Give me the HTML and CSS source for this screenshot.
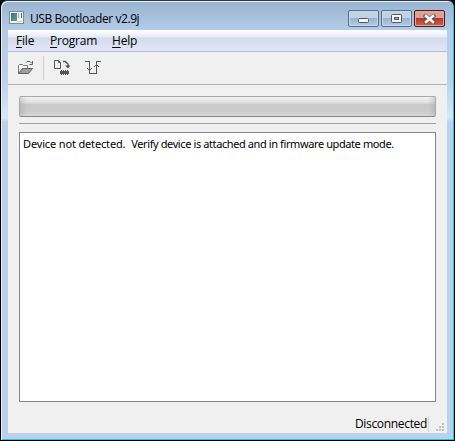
FILE: index.html
```html
<!DOCTYPE html>
<html lang="en">
<head>
<meta charset="utf-8">
<title>USB Bootloader v2.9j</title>
<link rel="stylesheet" href="styles.css">
</head>
<body>
<div class="window">
  <header class="titlebar">
    <svg class="app-icon" width="16" height="14" viewBox="0 0 16 14" shape-rendering="crispEdges">
      <defs><linearGradient id="screen" x1="0" y1="0" x2="1" y2="1"><stop offset="0" stop-color="#4068a0"/><stop offset="1" stop-color="#55b068"/></linearGradient></defs>
      <path fill="#888" d="M0 0h15v13H0z"/><path fill="#f4f4f4" d="M1 1h13v11H1z"/>
      <path fill="url(#screen)" d="M2 2h6v8H2z"/><path fill="#83b5a7" d="M9 2h1v5H9z"/><path fill="#387886" d="M12 2h1v5h-1z"/><path fill="#ccc" d="M9 10h4v1H9z"/>
    </svg>
    <h1 class="title">USB Bootloader v2.9j</h1>
    <div class="controls">
      <button class="control" aria-label="Minimize"><svg width="12" height="6" viewBox="0 0 12 6"><rect x=".5" y=".5" width="10" height="4" rx="1" fill="#f5f5f5" stroke="#535666"/></svg></button>
      <button class="control" aria-label="Maximize"><svg width="11" height="9" viewBox="0 0 11 9"><rect x=".5" y=".5" width="10" height="8" rx="1" fill="#f5f5f5" stroke="#535666"/><rect x="3.5" y="3.5" width="4" height="2" fill="#8db0d0" stroke="#535666"/></svg></button>
      <button class="control close" aria-label="Close"><svg width="13" height="10" viewBox="0 0 13 10"><path d="M2.500 2l8 6M10.500 2l-8 6" fill="none" stroke="#535666" stroke-width="4.200" stroke-linecap="square" opacity=".8"/><path d="M3 2l7 6M10 2L3 8" fill="none" stroke="#fff" stroke-width="2.400" stroke-linecap="square"/></svg></button>
    </div>
  </header>
  <main class="client">
    <nav class="menubar">
      <span class="menu file"><u>F</u>ile</span><span class="menu program"><u>P</u>rogram</span><span class="menu help"><u>H</u>elp</span>
    </nav>
    <div class="toolbar">
      <svg class="tool-open" width="17" height="16" viewBox="0 0 17 16">
        <path d="M1.500 13.500v-8l1-1h3l1 1h4v3" fill="#f8f8f8" stroke="#777"/>
        <path d="M1.500 13.500l4-5h10l-4 5z" fill="#a0a0a0" stroke="#606060"/>
        <path d="M9 2.500l1-1h3l2 2M15.500 1v3.500h-3" fill="none" stroke="#606060"/>
      </svg>
      <span class="divider"></span>
      <svg class="tool-write" width="17" height="16" viewBox="0 0 17 16">
        <path d="M.5.500h4l2 2v6h-6zM4.500.500v2h2" fill="none" stroke="#555"/>
        <path d="M9 1.500h2l3 2.500v3" fill="none" stroke="#555" stroke-width="1.500"/>
        <path d="M11 5.500h5.500L14 8.500z" fill="#555"/>
        <path d="M6 11h9v3H6zM7 10h1v5H7zM9 10h1v5H9zM11 10h1v5h-1zM13 10h1v5h-1z" fill="#555" shape-rendering="crispEdges"/>
      </svg>
      <svg class="tool-reset" width="17" height="16" viewBox="0 0 17 16" shape-rendering="crispEdges">
        <path d="M0 1h5v12h6V1h5v1h-4v12H4V2H0z" fill="#555"/>
        <path d="M2 8h1v1H2zM3 9h3v1H3zM6 8h1v1H6zM10 5h3v1h-3zM9 6h1v1H9zM13 6h1v1h-1z" fill="#555"/>
      </svg>
    </div>
    <section class="content">
      <div class="progress"></div>
      <div class="rule"></div>
      <div class="log"><span class="message"><span class="sentence">Device not detected.</span>&nbsp; Verify device is attached and in firmware update mode.</span></div>
    </section>
    <footer class="statusbar">
      <span class="status">Disconnected</span><span class="status-divider"></span>
      <svg class="grip" width="10" height="10" viewBox="0 0 10 10" shape-rendering="crispEdges"><path fill="#c0c0c0" d="M6 0h2v2H6zM3 3h2v2H3zM6 3h2v2H6zM0 6h2v2H0zM3 6h2v2H3zM6 6h2v2H6z"/></svg>
    </footer>
  </main>
</div>
</body>
</html>
```
FILE: styles.css
```css
* { box-sizing: border-box; }
body { margin: 0; background: #000; overflow: hidden; }
.window {
  width: 455px; height: 441px; padding: 0 6px 6px;
  border: 1px solid #000; border-top-color: #33353b;
  border-radius: 7px 7px 0 0;
  background: linear-gradient(#98b4d1 0, #b4cce6 29px, #bad1ea 80px, #dbe7f4 117px, #b9d1ea 121px);
  box-shadow: inset 1px 1px #e4eef8, inset -1px -1px #19c8e8;
  font: 12px/16px "Open Sans", "Noto Sans", sans-serif; color: #000;
}
.titlebar { height: 29px; display: flex; align-items: flex-start; padding: 0 3px 0 2px; }
.app-icon { margin-top: 10px; }
.title { margin: 10px 0 0 5px; font: inherit; letter-spacing: -.42px; white-space: nowrap; }
.controls { margin: 9px 0 0 auto; display: flex; gap: 2px; }
.control {
  width: 31px; height: 17px; padding: 0; display: flex; align-items: center; justify-content: center;
  border: 1px solid #596d87; border-radius: 2px;
  box-shadow: inset 0 0 0 1px #c7daed;
  background: linear-gradient(#bfd2e6 0 48%, #98b4d2 50%, #b3cce5);
}
.control:first-child svg { margin-top: 4px; }
.close { border-color: #4b1720; background: linear-gradient(#dda095 0 45%, #b93621 50%, #cf664b); box-shadow: inset 0 0 0 1px #e7a89b; }
.client { width: 439px; height: 403px; margin-left: 1px; background: #f0f0f0; display: flex; flex-direction: column; }
.menubar { height: 22px; display: flex; padding: 3px 8px 0; background: linear-gradient(#fff 0, #e5eaf5 7px, #d4dbed 8px, #e1e6f6 20px); border-bottom: 1px solid #b6bccc; }
.menu { white-space: nowrap; letter-spacing: -.2px; }
.menu u { text-underline-offset: 2px; text-decoration-thickness: 1px; }
.file { width: 34px; }
.program { width: 62px; }
.toolbar { height: 33px; border-bottom: 1px solid #b4b4b4; display: flex; align-items: flex-start; padding: 4px 0 0 9px; }
.tool-open { margin-top: 4px; }
.divider { width: 1px; height: 24px; margin: 0 10px 0 9px; background: #cfcfcf; }
.tool-write { margin-top: 4px; }
.tool-reset { margin: 4px 0 0 14px; }
.content { padding: 11px 11px 0; }
.progress { height: 21px; border: 1px solid #aaa; border-bottom-color: #888; border-radius: 2px; background: linear-gradient(90deg, #9995, transparent 7px, transparent calc(100% - 7px), #9995), linear-gradient(#f3f3f3 0, #dedede 6px, #c9c9c9 7px, #cbcbcb 14px, #d8d8d8); }
.rule { height: 1px; margin: 6px 0 8px; background: #a0a0a0; }
.log { height: 270px; border: 1px solid #828790; background: #fff; padding: 4px 3px; }
.message { display: block; font: 11px/14px "Noto Sans", sans-serif; letter-spacing: -.4px; white-space: nowrap; }
.sentence { margin-right: 1px; letter-spacing: -.15px; }
.statusbar { flex: 1; display: flex; align-items: flex-start; justify-content: flex-end; padding: 14px 1px 0 0; }
.status { white-space: nowrap; letter-spacing: -.33px; }
.status-divider { width: 1px; height: 16px; margin: 0 7px 0 1px; background: #d7d7d7; }
.grip { margin-top: 7px; }
```
